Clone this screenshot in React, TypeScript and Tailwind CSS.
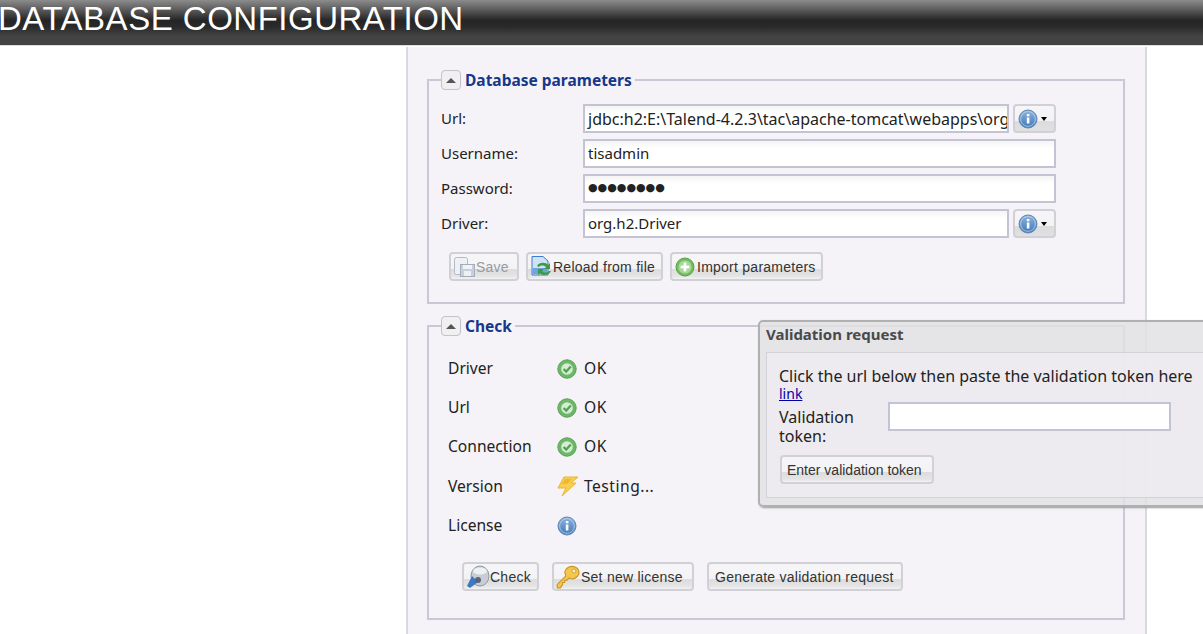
import React from 'react'

const font = "font-['Noto_Sans','DejaVu_Sans',sans-serif]"

function InfoIcon() {
    return (
        <svg width="20" height="20" viewBox="0 0 20 20">
            <defs>
                <linearGradient id="infoFill" x1="0" y1="0" x2="0" y2="1">
                    <stop offset="0" stopColor="#8fb4de" />
                    <stop offset="1" stopColor="#3f78b8" />
                </linearGradient>
            </defs>
            <circle cx="10" cy="10" r="9" fill="url(#infoFill)" stroke="#5f86b4" />
            <circle cx="10" cy="10" r="7.4" fill="none" stroke="#c4d8ee" strokeOpacity="0.7" />
            <rect x="8.8" y="8.5" width="2.6" height="6" fill="#fff" />
            <rect x="8.8" y="5" width="2.6" height="2.3" fill="#fff" />
        </svg>
    )
}

function OkIcon() {
    return (
        <svg width="20" height="20" viewBox="0 0 20 20">
            <circle cx="10" cy="10" r="9.2" fill="#6cb769" stroke="#5aa257" />
            <circle cx="10" cy="10" r="5.8" fill="#d7ebd5" />
            <path d="M6.6 10 L9.2 12.6 L13.8 7.6" fill="none" stroke="#4fa34c" strokeWidth="2.2" />
        </svg>
    )
}

function BoltIcon() {
    return (
        <svg width="22" height="22" viewBox="0 0 22 22">
            <path d="M7 2 H21 L14 8 H19 L5 21 L9 13 H1 Z" fill="#f8cf4a" stroke="#e8b53a" strokeWidth="1" strokeLinejoin="round" />
            <path d="M8 4 H15 L10 9 H5 Z" fill="#f2b632" />
        </svg>
    )
}

function KeyIcon() {
    return (
        <svg width="26" height="26" viewBox="0 0 24 24">
            <path d="M2 19 L10 11 L9 8 C10 3 15 1 19 3 C23 5 23 10 20 12 C18 14 15 14 13 13 L11 15 H9 V17 H7 V19 L5 22 H2 Z" fill="#f3c64d" stroke="#c8932a" strokeWidth="1" strokeLinejoin="round" />
            <circle cx="17.5" cy="6.5" r="1.8" fill="#fff2c0" stroke="#c8932a" strokeWidth="0.7" />
        </svg>
    )
}

function PlugIcon() {
    return (
        <svg width="24" height="24" viewBox="0 0 24 24">
            <ellipse cx="14" cy="11" rx="9" ry="10" fill="#c9ced6" stroke="#8d96a3" />
            <ellipse cx="14" cy="6" rx="7" ry="3.5" fill="#eef0f3" />
            <path d="M1 21 L6 11 L12 17 L4 23 Z" fill="#3d76c4" />
            <circle cx="12" cy="15" r="3" fill="#5b6470" />
        </svg>
    )
}

function SaveIcon() {
    return (
        <svg width="24" height="24" viewBox="0 0 24 24">
            <rect x="2.5" y="2.5" width="13" height="17" rx="2" fill="#eef0f4" stroke="#b5bbc5" />
            <rect x="8.5" y="9.5" width="14" height="12" fill="#c6cfdb" stroke="#a3adba" />
            <rect x="11" y="10" width="9" height="4" fill="#f1f3f6" />
            <rect x="12" y="16" width="7" height="5" fill="#eef0f4" />
        </svg>
    )
}

function ReloadIcon() {
    return (
        <svg width="24" height="24" viewBox="0 0 24 24">
            <path d="M3 1.5 H14 L19 6 V20 H3 Z" fill="#cfe2f6" stroke="#3f7ec7" />
            <rect x="3.5" y="13" width="15" height="6" fill="#6ea5df" />
            <path d="M8 11 C10 7 17 7 19 10 L21 8 V14 H15 L17 12 C15 10 11 10 10 12 Z" fill="#3f9b3f" />
            <path d="M22 16 C20 21 13 21 11 18 L9 20 V14 H15 L13 16 C15 18 18 18 20 16 Z" fill="#3f9b3f" />
        </svg>
    )
}

function PlusIcon() {
    return (
        <svg width="20" height="20" viewBox="0 0 20 20">
            <circle cx="10" cy="10" r="9" fill="#72bc5f" stroke="#57a24a" />
            <circle cx="10" cy="10" r="6.6" fill="#a5d895" />
            <rect x="8.6" y="5.6" width="2.8" height="8.8" fill="#fff" />
            <rect x="5.6" y="8.6" width="8.8" height="2.8" fill="#fff" />
        </svg>
    )
}

function Btn({ icon, disabled, className, children }: { icon?: React.ReactNode; disabled?: boolean; className: string; children: React.ReactNode }) {
    return (
        <div className={`h-[29px] rounded-[4px] border-2 border-[#d0d0d6] bg-[linear-gradient(#f6f5f7_0%,#f3f2f4_58%,#dcdcdc_60%,#e4e4e4_88%,#f3f2f4_100%)] flex items-center whitespace-nowrap font-['Liberation_Sans',sans-serif] text-[14px] tracking-[0.25px] ${disabled ? 'text-[#9a9a9a]' : 'text-[#333]'} ${className}`}>
            {icon}
            <span className="pt-[2px]">{children}</span>
        </div>
    )
}

function TextBox({ value, className }: { value: string; className: string }) {
    return (
        <div className={`h-[29px] border-2 border-[#c3c3d3] bg-[linear-gradient(#f4f4f4,#ffffff_30%)] pl-[3px] flex items-center overflow-hidden whitespace-nowrap text-[#222] ${className}`}>
            {value}
        </div>
    )
}

function InfoMenu() {
    return (
        <div className="w-[43px] h-[29px] ml-[4px] rounded-[4px] border-2 border-[#d0d0d6] bg-[linear-gradient(#f6f5f7_0%,#f3f2f4_58%,#dcdcdc_60%,#e0e0e0_100%)] flex items-center pl-[3px] gap-[3px]">
            <InfoIcon />
            <span className="w-0 h-0 border-x-[3px] border-x-transparent border-t-[4px] border-t-black" />
        </div>
    )
}

function Collapse() {
    return (
        <div className="w-[20px] h-[20px] rounded-[4px] border border-[#c2c2c8] bg-[#f0f0f2] flex items-center justify-center">
            <span className="w-0 h-0 border-x-[5px] border-x-transparent border-b-[5px] border-b-[#555]" />
        </div>
    )
}

function Legend({ title, className }: { title: string; className: string }) {
    return (
        <legend className={`pr-[3px] flex items-center gap-[4px] ${className}`}>
            <Collapse />
            <span className="text-[15.5px] font-bold text-[#15388a] leading-[20px]">{title}</span>
        </legend>
    )
}

function ParamRow({ label, children }: { label: string; children: React.ReactNode }) {
    return (
        <div className="flex items-center h-[29px] mb-[6px]">
            <div className="w-[142px] text-[15px] text-[#222]">{label}</div>
            {children}
        </div>
    )
}

function CheckRow({ label, icon, text }: { label: string; icon: React.ReactNode; text?: string }) {
    return (
        <div className="flex items-center h-[39.25px] text-[15.6px] text-[#222]">
            <div className="w-[109px]">{label}</div>
            <div className="w-[27px] flex items-center">{icon}</div>
            {text && <div className="tracking-[0.5px]">{text}</div>}
        </div>
    )
}

export default function App() {
    return (
        <div className={`relative w-[1203px] h-[634px] overflow-hidden bg-white ${font}`}>
            <div className="h-[46px] border-b border-[#dddddd] bg-[linear-gradient(#8c8c8c_0%,#5a5a5a_22%,#252525_45%,#2a2a2a_60%,#434343_80%,#434343_100%)] overflow-hidden">
                <h1 className="-ml-[2px] text-[33px] tracking-[0.5px] leading-[38px] text-white font-['Liberation_Sans',sans-serif] whitespace-nowrap">DATABASE CONFIGURATION</h1>
            </div>
            <div className="ml-[406px] mt-[1px] w-[741px] h-[590px] border-x-2 border-[#d8d8e0] bg-[#f5f3f7] pl-[19px] pr-[20px] pt-[23px]">
                <fieldset className="border-2 border-[#c8c8d6] h-[234px] pl-[12px] pr-[12px] pt-[14px]">
                    <Legend title="Database parameters" className="ml-0" />
                    <ParamRow label="Url:">
                        <TextBox value="jdbc:h2:E:\Talend-4.2.3\tac\apache-tomcat\webapps\org.talend" className="w-[426px] text-[16px]" />
                        <InfoMenu />
                    </ParamRow>
                    <ParamRow label="Username:">
                        <TextBox value="tisadmin" className="w-[473px] text-[15px]" />
                    </ParamRow>
                    <ParamRow label="Password:">
                        <TextBox value="●●●●●●●●" className="w-[473px] text-[11px] font-['DejaVu_Sans']" />
                    </ParamRow>
                    <ParamRow label="Driver:">
                        <TextBox value="org.h2.Driver" className="w-[426px] text-[15px]" />
                        <InfoMenu />
                    </ParamRow>
                    <div className="flex gap-[7px] ml-[8px] mt-[14px]">
                        <Btn disabled icon={<SaveIcon />} className="w-[70px] pl-[1px]">Save</Btn>
                        <Btn icon={<ReloadIcon />} className="w-[137px] pl-[1px]">Reload from file</Btn>
                        <Btn icon={<PlusIcon />} className="w-[153px] pl-[3px] gap-[2px]">Import parameters</Btn>
                    </div>
                </fieldset>
                <fieldset className="mt-[12px] border-2 border-[#c8c8d6] h-[304px] px-[19px] pt-[13px]">
                    <Legend title="Check" className="-ml-[7px]" />
                    <CheckRow label="Driver" icon={<OkIcon />} text="OK" />
                    <CheckRow label="Url" icon={<OkIcon />} text="OK" />
                    <CheckRow label="Connection" icon={<OkIcon />} text="OK" />
                    <CheckRow label="Version" icon={<BoltIcon />} text="Testing..." />
                    <CheckRow label="License" icon={<InfoIcon />} />
                    <div className="flex gap-[13px] ml-[14px] mt-[17px]">
                        <Btn icon={<PlugIcon />} className="w-[77px] pl-[2px]">Check</Btn>
                        <Btn icon={<KeyIcon />} className="w-[142px] pl-[1px]">Set new license</Btn>
                        <Btn className="w-[196px] pl-[6px]">Generate validation request</Btn>
                    </div>
                </fieldset>
            </div>

            <div className="absolute left-[758px] top-[320px] w-[470px] h-[187px] rounded-[5px] border-2 border-[#b0b0b0] bg-[#e2e0e4]/85 px-[6px] shadow-[1px_1px_2px_#999]">
                <div className="h-[30px] pb-[6px] flex items-center text-[15px] font-bold text-[#4a4a4a]">Validation request</div>
                <div className="h-[146px] border border-[#d2d2d8] bg-[#efecf1]/80 pl-[12px] pt-[14px] text-[16px] text-[#222]">
                    <div className="leading-[19px] whitespace-nowrap">Click the url below then paste the validation token here</div>
                    <a className="block text-[14px] leading-[16px] text-[#0000aa] underline">link</a>
                    <div className="flex">
                        <div className="w-[109px] leading-[19px] pt-[6px]">Validation token:</div>
                        <div className="w-[283px] h-[29px] border-2 border-[#c3c3d3] bg-white" />
                    </div>
                    <Btn className="w-[154px] ml-[1px] mt-[9px] pl-[5px] tracking-[0px]">Enter validation token</Btn>
                </div>
            </div>
        </div>
    )
}
